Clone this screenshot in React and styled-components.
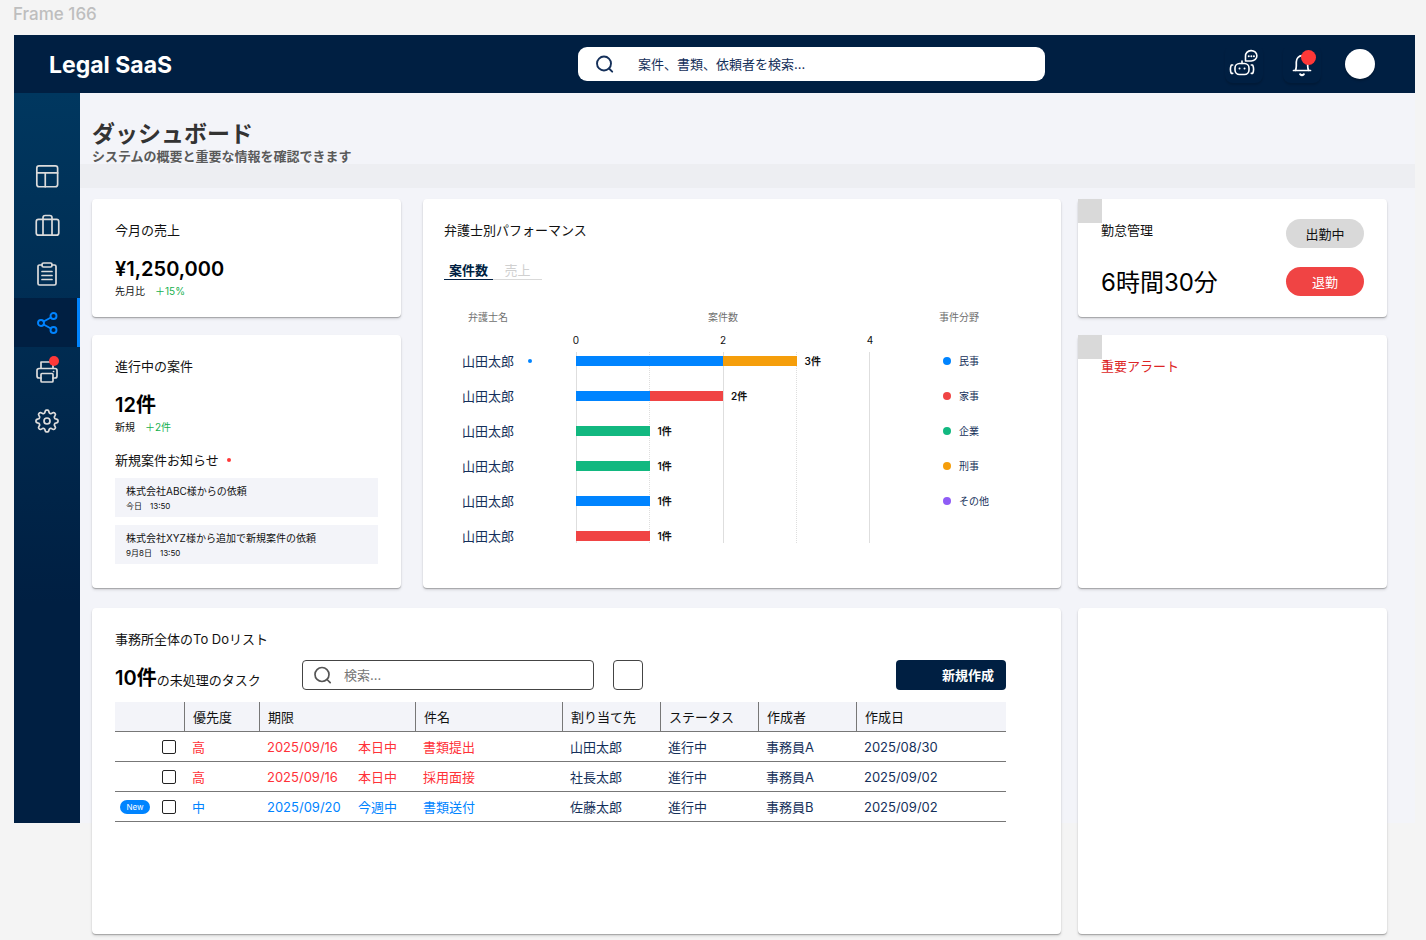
import React from "react";
import styled, { createGlobalStyle } from "styled-components";

const GlobalStyle = createGlobalStyle`
  *, *::before, *::after { box-sizing: border-box; }
  body {
    margin: 0;
    background: #f4f4f4;
    color: #111;
    font-family: Inter, "Noto Sans CJK JP", sans-serif;
    font-size: 13px;
    line-height: 20px;
  }
  h1, h2, h3, p, ul { margin: 0; padding: 0; }
  ul { list-style: none; }
  button, input { font: inherit; color: inherit; }
  button { border: 0; padding: 0; background: none; cursor: pointer; }
`;

const navy = "#001f42";
const navyText = "#15305a";
const colors = {
  blue: "#0084ff",
  red: "#f04444",
  green: "#12b880",
  orange: "#f59e0b",
  purple: "#8f5cf6",
};

/* How far the board's last row runs past the lower edge of the frame. */
const overhang = 111;

const Page = styled.div`
  padding: 4px 11px ${overhang + 6}px 13px;
`;

const FrameLabel = styled.p`
  height: 31px;
  color: #bebebe;
  font-size: 17px;
  font-weight: 500;
`;

const Frame = styled.div`
  margin-left: 1px;
  background: #f3f4f9;
`;

const Header = styled.header`
  display: grid;
  grid-template-columns: 564fr 467fr 370fr;
  align-items: center;
  height: 58px;
  background: ${navy};
`;

const Brand = styled.p`
  padding: 2px 0 0 35px;
  color: #fff;
  font-size: 23px;
  font-weight: 700;
  line-height: 30px;
`;

const SearchBox = styled.label`
  display: flex;
  align-items: center;
  height: ${(p) => (p.$outlined ? 30 : 34)}px;
  width: ${(p) => (p.$outlined ? "292px" : "auto")};
  padding-left: ${(p) => (p.$outlined ? 10 : 17)}px;
  gap: ${(p) => (p.$outlined ? 11 : 23)}px;
  border: ${(p) => (p.$outlined ? "1px solid #444" : "0")};
  border-radius: ${(p) => (p.$outlined ? 4 : 9)}px;
  background: #fff;
  color: ${(p) => (p.$outlined ? "#555" : navyText)};

  input {
    flex: 1;
    min-width: 0;
    padding: 0;
    border: 0;
    outline: 0;
    background: none;
  }
  input::placeholder {
    color: ${(p) => (p.$outlined ? "#777" : navyText)};
    opacity: 1;
  }
`;

const HeaderActions = styled.div`
  display: flex;
  justify-content: flex-end;
  align-items: center;
  gap: 20px;
  padding-right: 40px;
`;

const HeaderButton = styled.button`
  position: relative;
  display: grid;
  place-items: center;
  width: 38px;
  height: 38px;
  border-radius: 8px;
  box-shadow: 0 2px 2px rgba(0, 0, 0, 0.16);
  color: #fff;
`;

const Avatar = styled.button`
  width: 30px;
  height: 30px;
  margin-left: 4px;
  border-radius: 50%;
  background: #fff;
  box-shadow: 0 2px 2px rgba(0, 0, 0, 0.2);
`;

const AlertDot = styled.span`
  position: absolute;
  top: ${(p) => p.$top}px;
  right: ${(p) => p.$right}px;
  width: ${(p) => p.$size}px;
  height: ${(p) => p.$size}px;
  border-radius: 50%;
  background: #ff3838;
`;

const Body = styled.div`
  display: flex;
`;

const Sidebar = styled.nav`
  flex: none;
  width: 66px;
  padding-top: 58px;
  background: linear-gradient(#00375f, ${navy} 70%);
`;

const NavLink = styled.a`
  position: relative;
  display: grid;
  place-items: center;
  height: 49px;
  color: ${(p) => (p.$active ? colors.blue : "#dcdcdc")};
  background: ${(p) => (p.$active ? navy : "transparent")};
  box-shadow: ${(p) => (p.$active ? `inset -3px 0 ${colors.blue}` : "none")};
`;

const Main = styled.main`
  flex: 1;
  min-width: 0;
`;

const Heading = styled.div`
  height: 71px;
  padding: 26px 12px 0;
  color: #333;

  h1 {
    font-size: 23px;
    font-weight: 700;
    line-height: 30px;
  }
  p {
    color: #5a5a5a;
    font-weight: 600;
    line-height: 14px;
  }
`;

const Band = styled.div`
  height: 24px;
  background: #edeef2;
`;

const Board = styled.div`
  display: grid;
  grid-template-columns: 969fr 309fr;
  gap: 20px 17px;
  margin-bottom: -${overhang}px;
  padding: 11px 28px 0 12px;
`;

const Overview = styled.div`
  display: grid;
  grid-template-columns: 309fr 638fr;
  gap: 22px;
`;

const Stack = styled.div`
  display: flex;
  flex-direction: column;
  gap: 18px;
`;

const Card = styled.section`
  position: relative;
  min-height: ${(p) => p.$minHeight || 0}px;
  flex: ${(p) => (p.$grow ? 1 : "none")};
  padding: ${(p) => p.$padding || "21px 23px 16px"};
  border-radius: 4px;
  background: #fff;
  box-shadow: 0 1px 1px rgba(0, 0, 0, 0.25), 0 2px 3px rgba(0, 0, 0, 0.12);
`;

const CardTitle = styled.h2`
  font-size: 13px;
  font-weight: 400;
  line-height: 20px;
  color: ${(p) => (p.$alert ? "#dc2626" : "#111")};
`;

const Figure = styled.p`
  margin-top: 17px;
  font-size: 20px;
  font-weight: 600;
  line-height: 24px;
  color: #000;
`;

const Compare = styled.p`
  display: flex;
  gap: 10px;
  margin-top: 2px;
  font-size: 10px;
  line-height: 16px;

  span { color: #16b04f; }
`;

const NoticeTitle = styled(CardTitle)`
  display: flex;
  align-items: center;
  gap: 8px;
  margin: 15px 0 8px;
`;

const Dot = styled.span`
  flex: none;
  width: ${(p) => p.$size}px;
  height: ${(p) => p.$size}px;
  border-radius: 50%;
  background: ${(p) => p.$color};
`;

const NoticeList = styled.ul`
  display: grid;
  gap: 8px;
`;

const Notice = styled.li`
  padding: 5px 11px 4px;
  background: #f3f4f9;
  font-size: 10px;
  line-height: 16px;

  p + p {
    display: flex;
    gap: 8px;
    font-size: 8px;
    line-height: 14px;
  }
`;

const Tabs = styled.div`
  display: flex;
  margin-top: 21px;
`;

const Tab = styled.button`
  width: 49px;
  height: 19px;
  line-height: 17px;
  border-bottom: 1px solid ${(p) => (p.$active ? navy : "#d9d9d9")};
  color: ${(p) => (p.$active ? navy : "#d0d0d0")};
  font-weight: ${(p) => (p.$active ? 700 : 400)};
`;

const Chart = styled.div`
  display: grid;
  grid-template-columns: 132fr 294fr 69fr 101fr;
  margin-top: 29px;
`;

const ChartHead = styled.h3`
  grid-column: ${(p) => p.$column};
  padding-left: ${(p) => p.$indent || 0}px;
  text-align: ${(p) => p.$align || "left"};
  color: #707070;
  font-size: 10px;
  font-weight: 400;
  line-height: 16px;
`;

const Axis = styled.div`
  grid-column: 2;
  display: flex;
  justify-content: space-between;
  margin-top: 7px;
  height: 11px;
  font-size: 10px;
  line-height: 16px;

  span {
    display: flex;
    justify-content: center;
    width: 0;
  }
`;

const ChartList = styled.ul`
  grid-column: ${(p) => p.$column};
  grid-row: 3;
  z-index: 1;

  li {
    display: flex;
    align-items: center;
    height: 35px;
    color: ${navyText};
  }
`;

const LawyerRow = styled.li`
  gap: 14px;
  padding-left: 18px;
`;

const LegendRow = styled.li`
  gap: 8px;
  padding-left: 4px;
  font-size: 10px;
`;

const GridLines = styled.div`
  grid-column: 2;
  grid-row: 3;
  display: flex;
  margin: 9px 0 10px;
  border-right: 1px solid #dedede;
`;

const GridLine = styled.span`
  flex: 1;
  border-left: 1px ${(p) => (p.$dotted ? "dotted" : "solid")} #dedede;
`;

const Segment = styled.span`
  height: 10px;
  background: ${(p) => p.$color};
`;

const Count = styled.span`
  margin-left: 8px;
  color: #111;
  font-size: 10px;
  font-weight: 600;
`;

const CornerTile = styled.span`
  position: absolute;
  top: 0;
  left: 0;
  width: 24px;
  height: 24px;
  background: #d9d9d9;
`;

const Attendance = styled.div`
  display: flex;
  justify-content: space-between;
`;

const WorkSummary = styled.div`
  padding-top: 1px;
`;

const WorkTime = styled.p`
  margin-top: 28px;
  font-size: 24px;
  line-height: 30px;
  color: #000;
`;

const PillStack = styled.div`
  display: grid;
  align-content: start;
  gap: 19px;
`;

const Pill = styled.button`
  width: 78px;
  height: 29px;
  border-radius: 15px;
  background: ${(p) => (p.$danger ? colors.red : "#d9d9d9")};
  color: ${(p) => (p.$danger ? "#fff" : "#111")};
`;

const Toolbar = styled.div`
  display: flex;
  align-items: center;
  height: 30px;
  margin: 11px 0 12px;
`;

const Pending = styled.p`
  width: 187px;
  padding-top: 7px;
  line-height: 30px;

  strong {
    color: #000;
    font-size: 20px;
    font-weight: 600;
  }
`;

const FilterButton = styled.button`
  width: 30px;
  height: 30px;
  margin-left: 19px;
  border: 1px solid #444;
  border-radius: 4px;
`;

const CreateButton = styled.button`
  width: 110px;
  height: 30px;
  margin-left: auto;
  padding-right: 12px;
  border-radius: 4px;
  background: ${navy};
  color: #fff;
  font-weight: 700;
  text-align: right;
`;

const Table = styled.table`
  width: 100%;
  table-layout: fixed;
  border-collapse: separate;
  border-spacing: 0;

  th, td {
    height: 30px;
    padding: 0 8px;
    border-bottom: 1px solid #777;
    text-align: left;
    font-weight: 400;
    white-space: nowrap;
  }
  th { background: #f3f4f9; }
  th + th { border-left: 1px solid #777; }
  td { color: ${navyText}; }
  td:first-child { padding-left: 4px; }
`;

const ToneCell = styled.td`
  && { color: ${(p) => (p.$tone === "high" ? "#ff3238" : colors.blue)}; }
`;

const Deadline = styled.div`
  display: grid;
  grid-template-columns: 91px auto;
`;

const PickCell = styled.div`
  display: flex;
  justify-content: flex-end;
  align-items: center;
  gap: 12px;
`;

const NewBadge = styled.span`
  width: 30px;
  height: 14px;
  border-radius: 7px;
  background: ${colors.blue};
  color: #fff;
  font-size: 8px;
  line-height: 14px;
  text-align: center;
`;

const Checkbox = styled.input`
  appearance: none;
  flex: none;
  width: 14px;
  height: 14px;
  margin: 0;
  border: 1px solid #222;
  border-radius: 2px;
  background: #fff;

  &:checked { background: ${navy}; }
`;

function Icon({ size = 24, stroke = 1.7, box = 24, children }) {
  return (
    <svg
      width={size}
      height={size}
      viewBox={`0 0 ${box} ${box}`}
      fill="none"
      stroke="currentColor"
      strokeWidth={stroke}
      strokeLinecap="round"
      strokeLinejoin="round"
      aria-hidden="true"
    >
      {children}
    </svg>
  );
}

const SearchIcon = ({ size, stroke }) => (
  <Icon size={size} stroke={stroke} box={20}>
    <circle cx="9" cy="9.5" r="7" />
    <path d="M14 14.500l3.200 3.200" />
  </Icon>
);

const RobotIcon = () => (
  <Icon size={30} box={30} stroke={1.6}>
    <rect x="6" y="14.500" width="14" height="11" rx="4.500" />
    <path d="M13 14.500v-2.500M3.700 16H2.300q-.9 2-.9 4.200t.9 4.200h1.400M22.300 16h1.400q.9 2 .9 4.200t-.9 4.200h-1.400" />
    <path d="M16.500 12V7.200a5.700 5.200 0 1 1 5.700 4.800H16.500z" />
    <path d="M19.700 7.200h.1M22.300 7.200h.1M24.900 7.200h.1M10.500 19.500h.1M15.500 19.500h.1" strokeWidth="1.900" />
  </Icon>
);

const BellIcon = () => (
  <Icon size={26} box={26} stroke={1.7}>
    <path d="M4.500 19.500h17M6.300 19.500c.9-1.600 1-2.700 1-4.500v-4a5.700 6.300 0 0 1 11.400 0v4c0 1.800.1 2.900 1 4.500" />
    <path d="M11.200 23.200q1.800 1.800 3.600 0" strokeWidth="2" />
  </Icon>
);

const LayoutIcon = () => (
  <Icon size={27} stroke={1.5}>
    <rect x="2.500" y="3.500" width="18.500" height="18.500" rx="2" />
    <path d="M2.500 9.700h18.500M10 22V9.700" />
  </Icon>
);

const BriefcaseIcon = () => (
  <Icon size={27} stroke={1.5}>
    <rect x="2" y="7.500" width="20" height="14" rx="2" />
    <path d="M16 21.500V6a2 2 0 0 0-2-2h-4a2 2 0 0 0-2 2v15.500" />
  </Icon>
);

const ClipboardIcon = () => (
  <Icon>
    <path d="M7 3H4.500A1.500 1.500 0 0 0 3 4.500v17A1.500 1.500 0 0 0 4.500 23h15a1.500 1.500 0 0 0 1.500-1.500v-17A1.500 1.500 0 0 0 19.500 3H17" />
    <rect x="7" y="1" width="10" height="4" rx="1.500" />
    <path d="M7 9.500h10M7 13.500h10M7 17.500h10" />
  </Icon>
);

const ShareIcon = () => (
  <Icon stroke={1.9}>
    <circle cx="18.500" cy="5" r="3" />
    <circle cx="6" cy="12" r="3" />
    <circle cx="18.500" cy="19" r="3" />
    <path d="M8.600 13.500l7.300 4M15.900 6.500l-7.300 4" />
  </Icon>
);

const PrinterIcon = () => (
  <Icon>
    <path d="M6 8.500V2h12v6.500M6 18H4a2 2 0 0 1-2-2v-5.500a2 2 0 0 1 2-2h16a2 2 0 0 1 2 2V16a2 2 0 0 1-2 2h-2" />
    <rect x="6" y="13.500" width="12" height="8.500" rx="1" />
    <path d="M18.500 11.500h.1" />
  </Icon>
);

/* Outline of an eight-toothed gear, sampled as a closed wave round the hub. */
const gearOutline =
  Array.from({ length: 96 }, (_, i) => {
    const angle = (i / 96) * Math.PI * 2;
    const radius = 9.6 + 1.5 * Math.tanh(1.8 * Math.cos(8 * angle));
    const x = 12 + radius * Math.sin(angle);
    const y = 12 - radius * Math.cos(angle);
    return `${i ? "L" : "M"}${x.toFixed(2)} ${y.toFixed(2)}`;
  }).join("") + "Z";

const GearIcon = () => (
  <Icon>
    <path d={gearOutline} />
    <circle cx="12" cy="12" r="3" />
  </Icon>
);

const navItems = [
  { label: "ダッシュボード", icon: LayoutIcon },
  { label: "案件", icon: BriefcaseIcon },
  { label: "書類", icon: ClipboardIcon },
  { label: "共有", icon: ShareIcon, active: true },
  { label: "印刷", icon: PrinterIcon, alert: true },
  { label: "設定", icon: GearIcon },
];

const notices = [
  { title: "株式会社ABC様からの依頼", day: "今日", time: "13:50" },
  { title: "株式会社XYZ様から追加で新規案件の依頼", day: "9月8日", time: "13:50" },
];

const lawyers = [
  { name: "山田太郎", marked: true, parts: [["blue", 2], ["orange", 1]] },
  { name: "山田太郎", parts: [["blue", 1], ["red", 1]] },
  { name: "山田太郎", parts: [["green", 1]] },
  { name: "山田太郎", parts: [["green", 1]] },
  { name: "山田太郎", parts: [["blue", 1]] },
  { name: "山田太郎", parts: [["red", 1]] },
];

const legend = [
  ["民事", "blue"],
  ["家事", "red"],
  ["企業", "green"],
  ["刑事", "orange"],
  ["その他", "purple"],
];

const columns = [
  ["", 69],
  ["優先度", 75],
  ["期限", 156],
  ["件名", 147],
  ["割り当て先", 98],
  ["ステータス", 98],
  ["作成者", 98],
  ["作成日", 150],
];
const columnTotal = columns.reduce((sum, [, w]) => sum + w, 0);

const tasks = [
  { tone: "high", priority: "高", due: "2025/09/16", term: "本日中", title: "書類提出", owner: "山田太郎", status: "進行中", author: "事務員A", created: "2025/08/30" },
  { tone: "high", priority: "高", due: "2025/09/16", term: "本日中", title: "採用面接", owner: "社長太郎", status: "進行中", author: "事務員A", created: "2025/09/02" },
  { tone: "mid", isNew: true, priority: "中", due: "2025/09/20", term: "今週中", title: "書類送付", owner: "佐藤太郎", status: "進行中", author: "事務員B", created: "2025/09/02" },
];

function PerformanceChart() {
  return (
    <Chart>
      <ChartHead $column={1} $indent={24}>弁護士名</ChartHead>
      <ChartHead $column={2} $align="center">案件数</ChartHead>
      <ChartHead $column={4}>事件分野</ChartHead>
      <Axis>
        <span>0</span>
        <span>2</span>
        <span>4</span>
      </Axis>
      <ChartList $column={1}>
        {lawyers.map((l, i) => (
          <LawyerRow key={i}>
            {l.name}
            {l.marked && <Dot $size={4} $color={colors.blue} />}
          </LawyerRow>
        ))}
      </ChartList>
      <GridLines>
        <GridLine />
        <GridLine $dotted />
        <GridLine />
        <GridLine $dotted />
      </GridLines>
      <ChartList $column={2}>
        {lawyers.map((l, i) => (
          <li key={i}>
            {l.parts.map(([color, n]) => (
              <Segment key={color} $color={colors[color]} style={{ width: `${n * 25}%` }} />
            ))}
            <Count>{l.parts.reduce((sum, [, n]) => sum + n, 0)}件</Count>
          </li>
        ))}
      </ChartList>
      <ChartList $column={4}>
        {legend.map(([label, color]) => (
          <LegendRow key={label}>
            <Dot $size={8} $color={colors[color]} />
            {label}
          </LegendRow>
        ))}
      </ChartList>
    </Chart>
  );
}

function TaskTable() {
  return (
    <Table>
      <colgroup>
        {columns.map(([label, w]) => (
          <col key={label} style={{ width: `${(w / columnTotal) * 100}%` }} />
        ))}
      </colgroup>
      <thead>
        <tr>
          {columns.map(([label]) => (
            <th key={label} scope="col">{label}</th>
          ))}
        </tr>
      </thead>
      <tbody>
        {tasks.map((t) => (
          <tr key={t.title}>
            <td>
              <PickCell>
                {t.isNew && <NewBadge>New</NewBadge>}
                <Checkbox type="checkbox" aria-label={t.title} />
              </PickCell>
            </td>
            <ToneCell $tone={t.tone}>{t.priority}</ToneCell>
            <ToneCell $tone={t.tone}>
              <Deadline>
                <span>{t.due}</span>
                <span>{t.term}</span>
              </Deadline>
            </ToneCell>
            <ToneCell $tone={t.tone}>{t.title}</ToneCell>
            <td>{t.owner}</td>
            <td>{t.status}</td>
            <td>{t.author}</td>
            <td>{t.created}</td>
          </tr>
        ))}
      </tbody>
    </Table>
  );
}

export default function App() {
  return (
    <Page>
      <GlobalStyle />
      <FrameLabel>Frame 166</FrameLabel>
      <Frame>
        <Header>
          <Brand>Legal SaaS</Brand>
          <SearchBox>
            <SearchIcon size={20} stroke={1.9} />
            <input type="search" aria-label="検索" placeholder="案件、書類、依頼者を検索..." />
          </SearchBox>
          <HeaderActions>
            <HeaderButton aria-label="アシスタント">
              <RobotIcon />
            </HeaderButton>
            <HeaderButton aria-label="通知">
              <BellIcon />
              <AlertDot $top={5} $right={5} $size={15} />
            </HeaderButton>
            <Avatar aria-label="アカウント" />
          </HeaderActions>
        </Header>
        <Body>
          <Sidebar>
            {navItems.map(({ label, icon: NavIcon, active, alert }) => (
              <NavLink key={label} href="#" aria-label={label} $active={active}>
                <NavIcon />
                {alert && <AlertDot $top={9} $right={21} $size={10} />}
              </NavLink>
            ))}
          </Sidebar>
          <Main>
            <Heading>
              <h1>ダッシュボード</h1>
              <p>システムの概要と重要な情報を確認できます</p>
            </Heading>
            <Band />
            <Board>
              <Overview>
                <Stack>
                  <Card $minHeight={118}>
                    <CardTitle>今月の売上</CardTitle>
                    <Figure>¥1,250,000</Figure>
                    <Compare>
                      先月比<span>＋15%</span>
                    </Compare>
                  </Card>
                  <Card $minHeight={253}>
                    <CardTitle>進行中の案件</CardTitle>
                    <Figure>12件</Figure>
                    <Compare>
                      新規<span>＋2件</span>
                    </Compare>
                    <NoticeTitle as="h3">
                      新規案件お知らせ
                      <Dot $size={4} $color="#ff3838" />
                    </NoticeTitle>
                    <NoticeList>
                      {notices.map((n) => (
                        <Notice key={n.title}>
                          <p>{n.title}</p>
                          <p>
                            <span>{n.day}</span>
                            <span>{n.time}</span>
                          </p>
                        </Notice>
                      ))}
                    </NoticeList>
                  </Card>
                </Stack>
                <Card $padding="21px 21px 0">
                  <CardTitle>弁護士別パフォーマンス</CardTitle>
                  <Tabs role="tablist">
                    <Tab role="tab" aria-selected="true" $active>案件数</Tab>
                    <Tab role="tab" aria-selected="false">売上</Tab>
                  </Tabs>
                  <PerformanceChart />
                </Card>
              </Overview>
              <Stack>
                <Card $minHeight={118} $padding="20px 23px 0">
                  <CornerTile />
                  <Attendance>
                    <WorkSummary>
                      <CardTitle>勤怠管理</CardTitle>
                      <WorkTime>6時間30分</WorkTime>
                    </WorkSummary>
                    <PillStack>
                      <Pill>出勤中</Pill>
                      <Pill $danger>退勤</Pill>
                    </PillStack>
                  </Attendance>
                </Card>
                <Card $grow>
                  <CornerTile />
                  <CardTitle $alert>重要アラート</CardTitle>
                </Card>
              </Stack>
              <Card $minHeight={326} $padding="21px 55px 21px 23px">
                <CardTitle>事務所全体のTo Doリスト</CardTitle>
                <Toolbar>
                  <Pending>
                    <strong>10件</strong>の未処理のタスク
                  </Pending>
                  <SearchBox $outlined>
                    <SearchIcon size={20} stroke={1.7} />
                    <input type="search" aria-label="タスクを検索" placeholder="検索..." />
                  </SearchBox>
                  <FilterButton aria-label="絞り込み" />
                  <CreateButton>新規作成</CreateButton>
                </Toolbar>
                <TaskTable />
              </Card>
              <Card />
            </Board>
          </Main>
        </Body>
      </Frame>
    </Page>
  );
}
